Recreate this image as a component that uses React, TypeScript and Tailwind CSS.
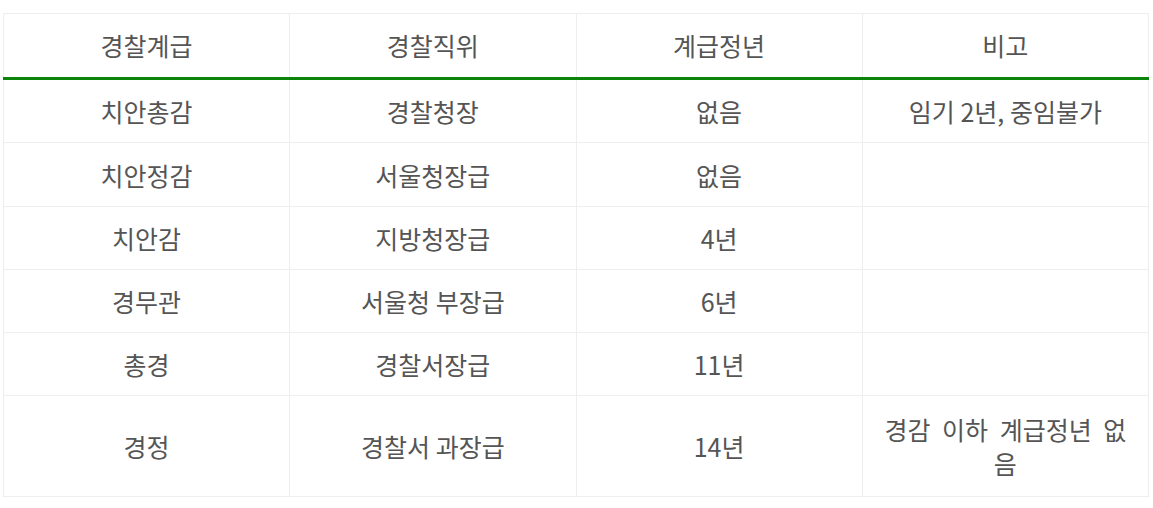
const headers = ['경찰계급', '경찰직위', '계급정년', '비고']

const rows: string[][] = [
  ['치안총감', '경찰청장', '없음', '임기 2년, 중임불가'],
  ['치안정감', '서울청장급', '없음', ''],
  ['치안감', '지방청장급', '4년', ''],
  ['경무관', '서울청 부장급', '6년', ''],
  ['총경', '경찰서장급', '11년', ''],
  ['경정', '경찰서 과장급', '14년', '경감 이하 계급정년 없음'],
]

const rowHeights = ['h-[64px]', 'h-[64px]', 'h-[63px]', 'h-[63px]', 'h-[63px]', 'h-[101px]']

export default function App() {
  return (
    <div
      className="min-h-[508px] bg-white pl-[3px] pt-[13px]"
      style={{ fontFamily: '"Noto Sans CJK KR", "Noto Sans", sans-serif' }}
    >
      <table className="w-[1146px] table-fixed border-collapse text-[25px] text-[#555]">
        <thead>
          <tr>
            {headers.map((h) => (
              <th
                key={h}
                className="h-[65px] border border-[#eeeeee] border-b-[3px] border-b-[#0a850a] px-[15px] text-center font-normal"
              >
                {h}
              </th>
            ))}
          </tr>
        </thead>
        <tbody>
          {rows.map((row, i) => (
            <tr key={i} className={rowHeights[i]}>
              {row.map((cell, j) => (
                <td
                  key={j}
                  className={`border border-[#eeeeee] px-[15px] text-center leading-[34px] ${
                    i === rows.length - 1 && j === 3 ? 'break-all [word-spacing:6px]' : ''
                  }`}
                >
                  {cell}
                </td>
              ))}
            </tr>
          ))}
        </tbody>
      </table>
    </div>
  )
}
